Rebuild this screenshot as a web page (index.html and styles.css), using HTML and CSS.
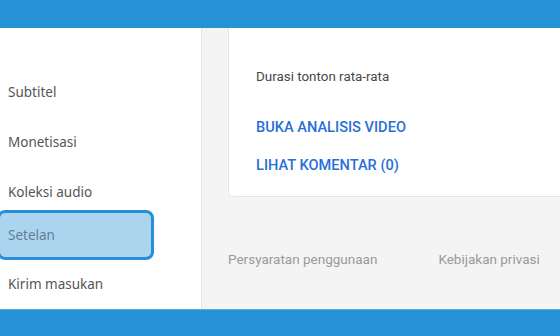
FILE: index.html
```html
<!DOCTYPE html>
<html lang="id">
<head>
    <meta charset="UTF-8">
    <meta name="viewport" content="width=device-width, initial-scale=1.0">
    <title>Setelan</title>
    <link rel="stylesheet" href="styles.css">
</head>
<body>
    <header class="topbar"></header>

    <div class="page">
        <nav class="sidebar">
            <a class="nav-item">Subtitel</a>
            <a class="nav-item">Monetisasi</a>
            <a class="nav-item">Koleksi audio</a>
            <a class="nav-item active">Setelan</a>
            <a class="nav-item">Kirim masukan</a>
        </nav>

        <main class="main">
            <section class="card">
                <p class="stat-label">Durasi tonton rata-rata</p>
                <a class="card-link link-first">BUKA ANALISIS VIDEO</a>
                <a class="card-link">LIHAT KOMENTAR (0)</a>
            </section>

            <footer class="footer">
                <a class="footer-link">Persyaratan penggunaan</a>
                <a class="footer-link">Kebijakan privasi</a>
            </footer>
        </main>
    </div>

    <div class="bottombar"></div>
</body>
</html>
```

FILE: styles.css
```css
* {
    margin: 0;
    padding: 0;
    box-sizing: border-box;
}

html, body {
    height: 100%;
}

body {
    font-family: 'Noto Sans', sans-serif;
    background: #f4f4f4;
    color: #333;
    display: flex;
    flex-direction: column;
    overflow: hidden;
}

.topbar {
    height: 28px;
    flex-shrink: 0;
    background: #2692d6;
}

.bottombar {
    height: 27px;
    flex-shrink: 0;
    background: #2692d6;
    border-top: 1px solid #5aaee3;
}

.page {
    flex: 1;
    display: flex;
    min-height: 0;
}

.sidebar {
    width: 202px;
    flex-shrink: 0;
    background: #ffffff;
    border-right: 1px solid #e6e6e6;
    padding-top: 39px;
    display: flex;
    flex-direction: column;
}

.nav-item {
    display: block;
    width: 157px;
    height: 50px;
    margin-left: -3px;
    padding-left: 11px;
    line-height: 44px;
    font-size: 13.5px;
    color: #555;
    border: 3px solid transparent;
    border-left: none;
}

.active {
    height: 54px;
    margin: -7px 0 -1px -3px;
    padding-left: 8px;
    background: #abd5ef;
    border: 3px solid #2590d8;
    border-radius: 8px;
    color: #5f7f94;
}

.main {
    flex: 1;
    padding-left: 26px;
    display: flex;
    flex-direction: column;
}

.card {
    background: #ffffff;
    border: 1px solid #e4e4e4;
    border-top: none;
    border-right: none;
    border-bottom-left-radius: 5px;
    height: 169px;
    padding: 40px 0 0 27px;
    font-family: 'Roboto', sans-serif;
}

.stat-label {
    font-size: 13.4px;
    color: #474747;
    line-height: 18px;
}

.card-link {
    display: block;
    font-size: 14.6px;
    font-weight: 500;
    color: #2a6fd6;
    line-height: 18px;
}

.link-first {
    margin-top: 32px;
    margin-bottom: 20px;
}

.footer {
    display: flex;
    gap: 61px;
    padding-top: 54px;
    font-family: 'Roboto', sans-serif;
}

.footer-link {
    font-size: 13.5px;
    color: #9a9a9a;
}
```
